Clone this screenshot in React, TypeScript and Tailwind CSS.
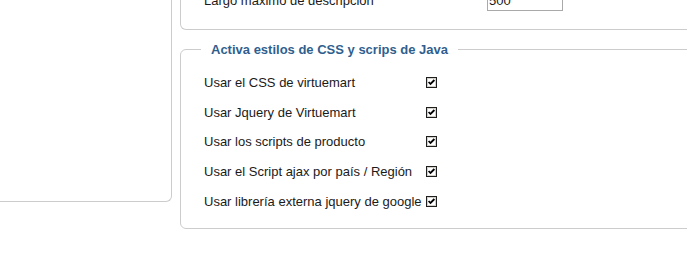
import React from 'react';

const rows = [
  'Usar el CSS de virtuemart',
  'Usar Jquery de Virtuemart',
  'Usar los scripts de producto',
  'Usar el Script ajax por país / Región',
  'Usar librería externa jquery de google',
];

function CheckBox() {
  return (
    <svg width="11" height="11" viewBox="0 0 11 11" className="block">
      <rect x="0.5" y="0.5" width="10" height="10" fill="#ffffff" stroke="#1e1e1e" />
      <rect x="1.5" y="1.5" width="8" height="8" fill="none" stroke="#d4d0c8" />
      <polyline points="2.6,5 4.5,7 8.4,3" fill="none" stroke="#000000" strokeWidth="1.8" />
    </svg>
  );
}

export default function App() {
  return (
    <div className="w-[687px] h-[261px] overflow-hidden bg-white font-['Liberation_Sans',Arial,sans-serif] text-[13px] text-[#1a1a1a]">
      <div className="flex items-start">
        {/* left panel, only its lower right corner shows */}
        <div className="w-[172px] h-[202px] shrink-0 border-r border-b border-[#cccccc] rounded-br-[6px]" />

        <div className="ml-[8px] w-[620px] shrink-0 flex flex-col">
          {/* previous fieldset, cut off at the top */}
          <div className="h-[30px] border-l border-b border-r border-[#cccccc] rounded-bl-[6px] rounded-br-[6px]">
            <div className="-mt-[15px] h-[30px] flex items-center pl-[23px]">
              <span className="w-[283px] leading-[15px]">Largo maximo de descripcion</span>
              <div className="w-[76px] h-[21px] border border-[#a9a9a9] bg-white pl-[1px] leading-[19px]">500</div>
            </div>
          </div>

          <fieldset className="mt-[12px] border border-[#cccccc] rounded-[6px] pl-[20px] pt-[11px] pb-[12px]">
            <legend className="px-[10px] font-bold text-[13px] leading-[15px] text-[#2f5f8f]">
              Activa estilos de CSS y scrips de Java
            </legend>
            <div className="ml-[3px] grid grid-cols-[auto_auto] auto-rows-[29.6px] gap-x-[4px] w-max">
              {rows.map(label => (
                <React.Fragment key={label}>
                  <div className="flex items-center leading-[15px] whitespace-nowrap">{label}</div>
                  <div className="flex items-center">
                    <CheckBox />
                  </div>
                </React.Fragment>
              ))}
            </div>
          </fieldset>
        </div>
      </div>
    </div>
  );
}
